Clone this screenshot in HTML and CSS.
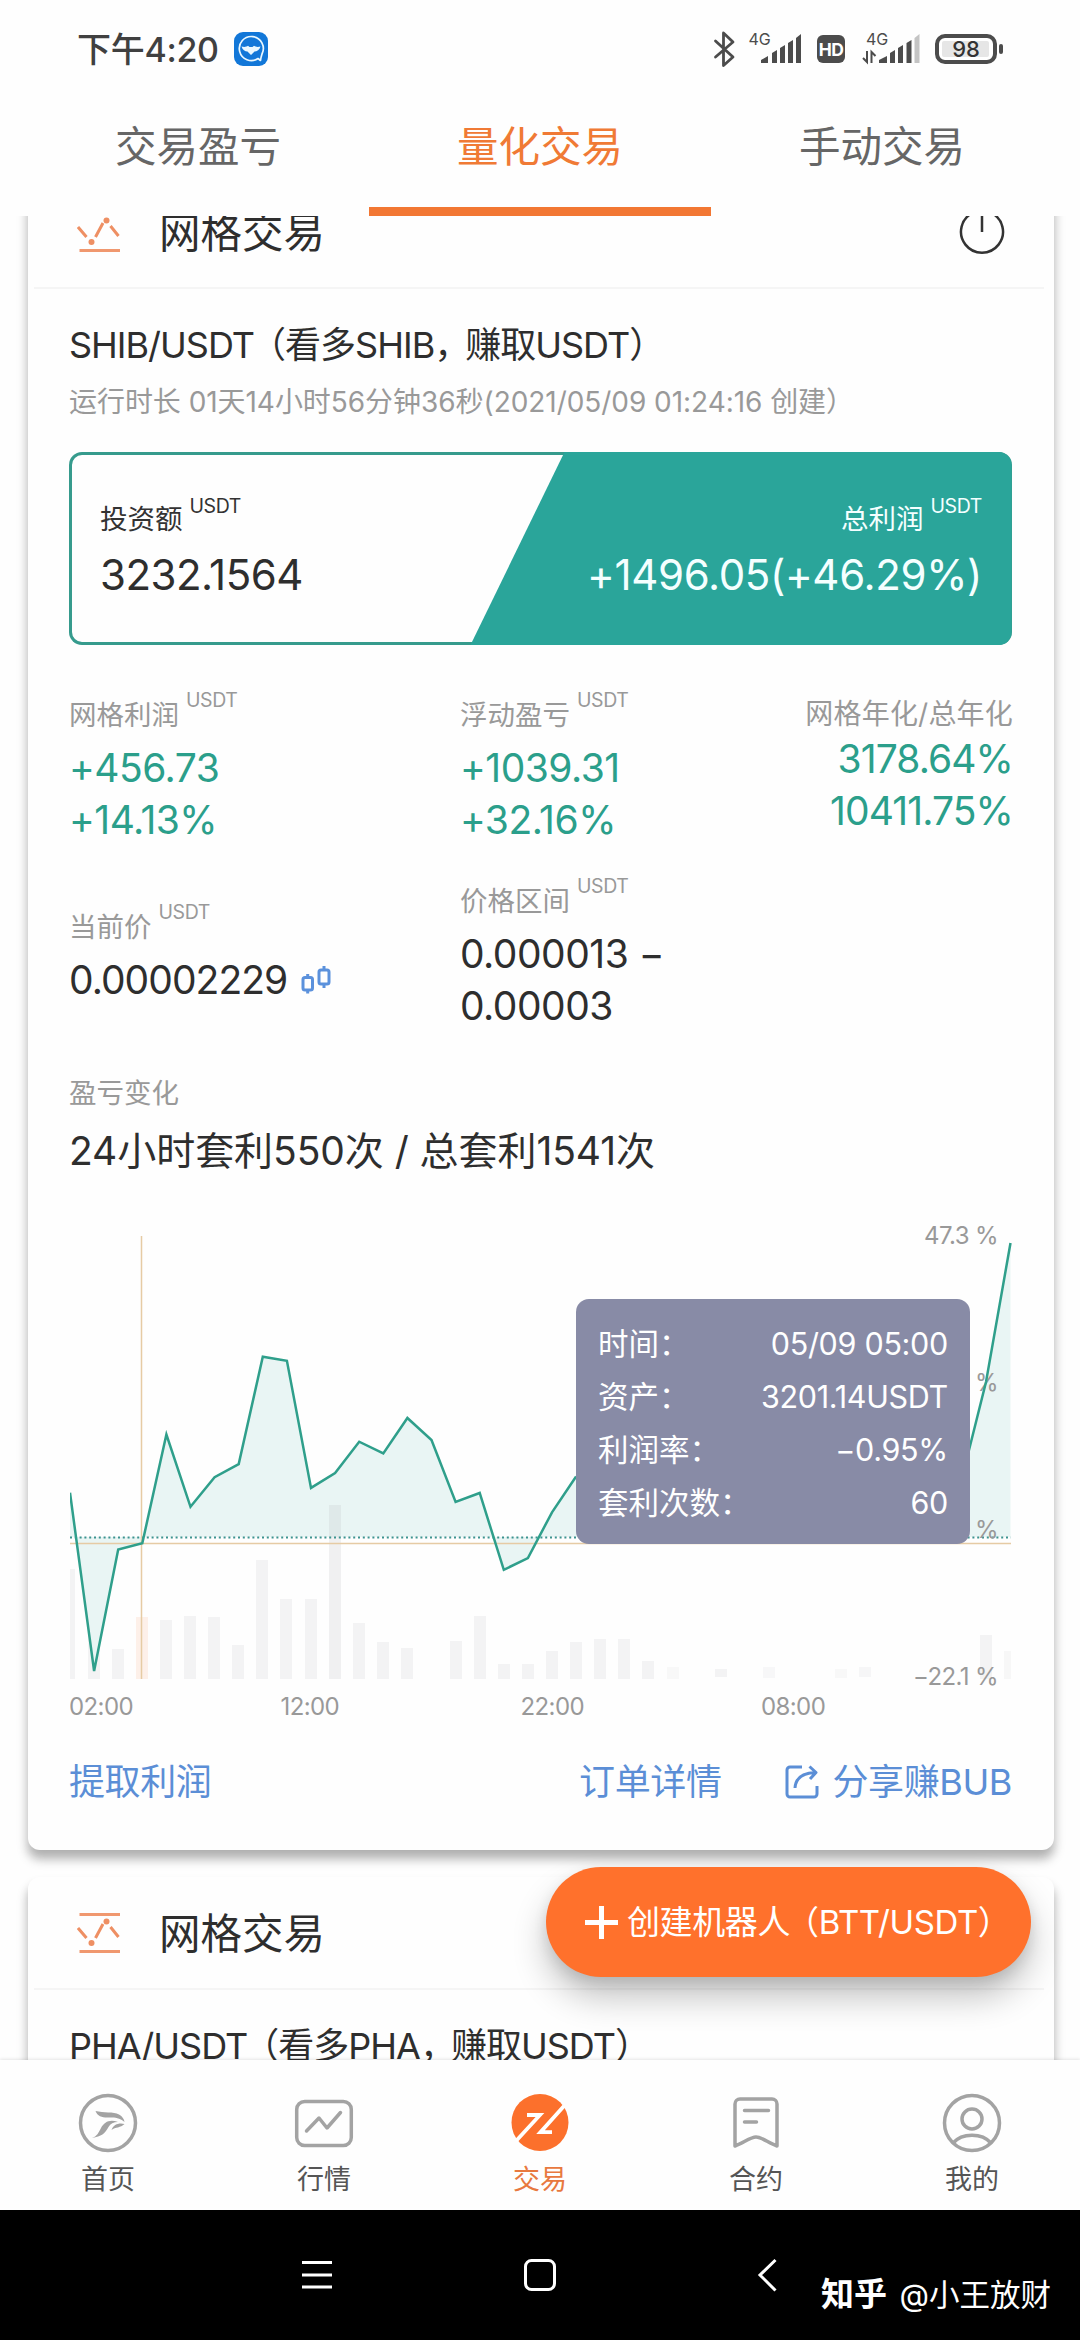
FILE: index.html
```html
<!DOCTYPE html>
<html lang="zh-CN">
<head>
<meta charset="utf-8">
<title>量化交易</title>
<link rel="stylesheet" href="styles.css">
</head>
<body>
<header class="statusbar">
  <span class="clock">下午4:20</span>
  <svg class="app-badge" width="34" height="34" viewBox="0 0 34 34"><rect width="34" height="34" rx="9" fill="#1277d8"/><path d="M26.5 28.5 24 26.500A12 12 0 1 1 28 22c-.8 2.500-1.300 4.500-1.500 6.500z" fill="none" stroke="#eaf8ff" stroke-width="1.700" stroke-linejoin="round"/><path d="M7.500 14.500c3 .8 5 .3 6.500-.8l1.500 1.300h3l1.500-1.300c1.500 1.100 3.500 1.600 6.500.8-1 3.500-3.500 5-6 5L17 23l-3.500-3.500c-2.500 0-5-1.500-6-5z" fill="#eaf8ff"/></svg>
  <svg class="indicators" width="292" height="40" viewBox="712 29 292 40">
    <g fill="none" stroke="#4c4c4c" stroke-width="2.800" stroke-linejoin="round" stroke-linecap="round"><path d="M715.500 41 733 57l-9.500 8.500V33L733 42 715.500 57"/></g>
    <g class="net"><text x="748.500" y="44.500">4G</text><text x="866" y="44.500">4G</text></g>
    <g fill="#4c4c4c">
      <path d="M761 63v-3l7-4v7zM772 53l5-3v13h-5zM780 48l5-3v18h-5zM788 43l5-3v23h-5zM796 38l5-4v29h-5z"/>
      <rect x="817" y="35" width="28" height="28" rx="6"/>
      <path d="M879 63v-3l8-4v7zM890 53l5-3v13h-5zM898 48l5-3v18h-5zM906.500 43l5-3v23h-5z"/>
      <path d="M914.500 38l5-4v29h-5z" fill="#c4c4c4"/>
      <rect x="999" y="44" width="4" height="10" rx="2"/>
    </g>
    <path d="M867 51v11l-4-4M871.500 63V52l4 4" fill="none" stroke="#4c4c4c" stroke-width="2"/>
    <text class="hd" x="831" y="55.500">HD</text>
    <rect x="937" y="36" width="58" height="26" rx="8" fill="#fff" stroke="#4c4c4c" stroke-width="4"/>
    <rect x="942" y="41" width="47" height="16" rx="2" fill="#e6e6e6"/>
    <text class="batt" x="966" y="57">98</text>
  </svg>
</header>

<nav class="tabs">
  <a class="tab">交易盈亏</a>
  <a class="tab tab-on">量化交易</a>
  <a class="tab">手动交易</a>
</nav>

<main class="scroller">
  <section class="card">
    <div class="card-head">
      <svg class="grid-icon" width="44" height="44" viewBox="0 0 44 44"><path d="M2.500 3.500H43M2.500 40.500H43" stroke="#f0986f" stroke-width="2.800"/><path d="M1 17l8.500 10M18.500 27l7.500-14M33.500 16l8 10" stroke="#ee8f63" stroke-width="3"/><circle cx="14.500" cy="32" r="3" fill="#ee8f63"/><circle cx="29.500" cy="10.500" r="3" fill="#ee8f63"/></svg>
      <h2>网格交易</h2>
      <svg class="power" width="46" height="46" viewBox="0 0 46 46" fill="none" stroke="#333" stroke-width="2.500"><path d="M14.500 3.500a21 21 0 1 0 17 0M23 0v23"/></svg>
    </div>
    <div class="card-body">
      <h3>SHIB/USDT<span class="paren">（</span>看多SHIB<span class="comma">，</span>赚取USDT）</h3>
      <p class="runtime">运行时长 01天14小时56分钟36秒(2021/05/09 01:24:16 创建）</p>

      <div class="summary">
        <svg class="slant" width="942" height="193" viewBox="0 0 942 193"><path d="M495 0H929a13 13 0 0 1 13 13V180a13 13 0 0 1-13 13H401z" fill="#2aa59a"/></svg>
        <div class="sum-side">
          <div class="label-row"><span>投资额</span><sup>USDT</sup></div>
          <div class="sum-value">3232.1564</div>
        </div>
        <div class="sum-side sum-right">
          <div class="label-row"><span>总利润</span><sup>USDT</sup></div>
          <div class="sum-value">+1496.05(+46.29%)</div>
        </div>
      </div>

      <div class="stats">
        <div>
          <div class="label-row"><span>网格利润</span><sup>USDT</sup></div>
          <div class="value up">+456.73<br>+14.13%</div>
        </div>
        <div>
          <div class="label-row"><span>浮动盈亏</span><sup>USDT</sup></div>
          <div class="value up">+1039.31<br>+32.16%</div>
        </div>
        <div class="stat-end">
          <div class="plain-label">网格年化/总年化</div>
          <div class="value up">3178.64%<br>10411.75%</div>
        </div>
        <div>
          <div class="label-row"><span>当前价</span><sup>USDT</sup></div>
          <div class="value price"><span>0.00002229</span><svg width="31" height="28" viewBox="0 0 31 28" fill="none" stroke="#5b91dc" stroke-width="3"><rect x="2" y="11.500" width="9.500" height="12.500" rx="2"/><path d="M6.700 8v3M6.700 24v3.500"/><rect x="18" y="4" width="10" height="14" rx="2"/><path d="M23 0v4M23 18v4"/></svg></div>
        </div>
        <div>
          <div class="label-row"><span>价格区间</span><sup>USDT</sup></div>
          <div class="value">0.000013 −<br>0.00003</div>
        </div>
      </div>

      <div class="plain-label change">盈亏变化</div>
      <div class="counts">24小时套利550次 / 总套利1541次</div>

      <div class="chart">
        <svg width="942" height="515" viewBox="70 1215 942 515">
          <g fill="#f3f3f4">
            <rect x="70" y="1569" width="5" height="110"/><rect x="88" y="1616" width="12" height="63"/><rect x="112" y="1649" width="12" height="30"/><rect x="136" y="1617" width="12" height="62" fill="#fdf0e9"/><rect x="160" y="1620" width="12" height="59"/><rect x="184" y="1616" width="12" height="63"/><rect x="208" y="1617" width="12" height="62"/><rect x="232" y="1645" width="12" height="34"/><rect x="256" y="1560" width="12" height="119"/><rect x="280" y="1599" width="12" height="80"/><rect x="305" y="1599" width="12" height="80"/><rect x="353" y="1623" width="12" height="56"/><rect x="377" y="1642" width="12" height="37"/><rect x="401" y="1648" width="12" height="31"/><rect x="450" y="1641" width="12" height="38"/><rect x="474" y="1616" width="12" height="63"/><rect x="498" y="1664" width="12" height="15"/><rect x="522" y="1664" width="12" height="15"/><rect x="546" y="1651" width="12" height="28"/><rect x="570" y="1642" width="12" height="37"/><rect x="594" y="1639" width="12" height="40"/><rect x="618" y="1639" width="12" height="40"/><rect x="642" y="1661" width="12" height="18"/><rect x="667" y="1667" width="12" height="12" fill="#f8f8f8"/><rect x="715" y="1669" width="12" height="8"/><rect x="763" y="1667" width="12" height="11" fill="#f7f7f8"/><rect x="835" y="1669" width="12" height="9" fill="#f8f8f8"/><rect x="859" y="1667" width="12" height="10" fill="#f6f6f7"/><rect x="980" y="1635" width="12" height="44"/><rect x="1004" y="1651" width="7" height="28" fill="#f7f7f7"/>
          </g>
          <path d="M70 1537V1492.700L94.100 1671 118.200 1549.500 142.300 1543.300 166.400 1434.500 190.500 1506.800 214.600 1477.200 238.700 1464.100 262.800 1356.700 286.900 1360.800 311 1487.900 335.100 1473 359.200 1441.700 383.300 1453.400 407.400 1418 431.500 1440 455.600 1502 479.700 1493 503.800 1569.800 527.900 1558.100 552 1512.300 576.100 1476.500 962 1478 986 1382 1010.500 1243V1537z" fill="#e9f5f4"/>
          <rect x="329" y="1505" width="12" height="32" fill="#dfe9e9"/><rect x="329" y="1537" width="12" height="142" fill="#f0f0f1"/>
          <path d="M70 1537.500H1011" stroke="#3d938f" stroke-width="2" stroke-dasharray="2 2.800"/>
          <path d="M70 1543.500H1011M141.500 1236V1679" stroke="#e6cba4" stroke-width="1.500" fill="none"/>
          <g class="axis"><text x="998" y="1244" text-anchor="end">47.3 %</text><text x="998" y="1391" text-anchor="end">%</text><text x="998" y="1538" text-anchor="end">%</text><text x="998" y="1685" text-anchor="end">−22.1 %</text></g>
          <path d="M70 1492.700 94.100 1671 118.200 1549.500 142.300 1543.300 166.400 1434.500 190.500 1506.800 214.600 1477.200 238.700 1464.100 262.800 1356.700 286.900 1360.800 311 1487.900 335.100 1473 359.200 1441.700 383.300 1453.400 407.400 1418 431.500 1440 455.600 1502 479.700 1493 503.800 1569.800 527.900 1558.100 552 1512.300 576.100 1476.500M962 1478 986 1382 1010.500 1243" fill="none" stroke="#2f9f8b" stroke-width="2.500"/>
          <g class="axis"><text x="69" y="1715">02:00</text><text x="280.500" y="1715">12:00</text><text x="520.500" y="1715">22:00</text><text x="761" y="1715">08:00</text></g>
        </svg>
        <dl class="tooltip">
          <div><dt>时间：</dt><dd>05/09 05:00</dd></div>
          <div><dt>资产：</dt><dd>3201.14USDT</dd></div>
          <div><dt>利润率：</dt><dd>−0.95%</dd></div>
          <div><dt>套利次数：</dt><dd>60</dd></div>
        </dl>
      </div>

      <div class="links">
        <a>提取利润</a>
        <a class="orders">订单详情</a>
        <a class="share"><svg width="34" height="34" viewBox="0 0 34 34" fill="none" stroke="#5b8ed6" stroke-width="3"><path d="M17 2H5a3 3 0 0 0-3 3v24a3 3 0 0 0 3 3h24a3 3 0 0 0 3-3v-8"/><path d="M10 23c.5-9 6-15 20.500-15.500M24.500 1.500l6.500 6-6 6.500" stroke-linejoin="round"/></svg>分享赚BUB</a>
      </div>
    </div>
  </section>

  <section class="card">
    <div class="card-head">
      <svg class="grid-icon" width="44" height="44" viewBox="0 0 44 44"><path d="M2.500 3.500H43M2.500 40.500H43" stroke="#f0986f" stroke-width="2.800"/><path d="M1 17l8.500 10M18.500 27l7.500-14M33.500 16l8 10" stroke="#ee8f63" stroke-width="3"/><circle cx="14.500" cy="32" r="3" fill="#ee8f63"/><circle cx="29.500" cy="10.500" r="3" fill="#ee8f63"/></svg>
      <h2>网格交易</h2>
    </div>
    <div class="card-body">
      <h3>PHA/USDT<span class="paren">（</span>看多PHA<span class="comma">，</span>赚取USDT）</h3>
    </div>
  </section>
</main>

<button class="fab"><svg width="33" height="33" viewBox="0 0 33 33"><path d="M16.500 0v33M0 16.500h33" stroke="#fff" stroke-width="5"/></svg><span>创建机器人<span class="paren">（</span>BTT/USDT）</span></button>

<nav class="bottom-nav">
  <a><svg width="60" height="60" viewBox="0 0 60 60"><circle cx="30" cy="30" r="27.500" fill="none" stroke="#a3a3a3" stroke-width="3.500"/><path d="M17.500 18c8 2 18 .5 23.500 3.500 3.500 2 5 4.500 5.500 7.500-6-5-11-4.500-17-4.500-6 0-10-1.500-12-6.500zM14 45c5-1.500 6.500-5.500 9-10 3.500-6 8.500-9 17-6-4.500 0-7.500 1.500-9.500 5-3.500 6.500-7 9.500-16.500 11zM46.500 31c-5-1.500-11 0-13 6 4-3 9-2 13-6z" fill="#a3a3a3"/></svg>首页</a>
  <a><svg width="60" height="60" viewBox="0 0 60 60" fill="none" stroke="#a3a3a3" stroke-width="3.500"><rect x="2.700" y="8.500" width="54.600" height="44" rx="8"/><path d="M12.500 38 25 25l8 10 13.500-15.500" stroke-linecap="round" stroke-linejoin="round"/></svg>行情</a>
  <a class="nav-on"><svg width="60" height="60" viewBox="0 0 60 60"><circle cx="30" cy="29.500" r="28.500" fill="#fc702c"/><path d="M17 22h13L6 48M54 13 30.500 39.200H42" fill="none" stroke="#fff" stroke-width="3.800"/></svg>交易</a>
  <a><svg width="60" height="60" viewBox="0 0 60 60" fill="none" stroke="#a3a3a3" stroke-width="3.500" stroke-linejoin="round" stroke-linecap="round"><path d="M9 53V11a5 5 0 0 1 5-5h32a5 5 0 0 1 5 5v42c-8-2.500-15-9-21-9s-13 6.500-21 9zM18.500 17.500h24M18.500 29h12"/></svg>合约</a>
  <a><svg width="60" height="60" viewBox="0 0 60 60" fill="none" stroke="#a3a3a3" stroke-width="3.500"><circle cx="30" cy="30" r="27.500"/><circle cx="30" cy="26" r="10"/><path d="M11 50c9-10.500 29-10.500 38 0"/></svg>我的</a>
</nav>

<footer class="system-nav">
  <svg width="1080" height="130" viewBox="0 2210 1080 130" fill="none" stroke="#fff"><path d="M302 2262.500h30M302 2275h30M302 2287h30" stroke-width="3"/><rect x="525.500" y="2260.500" width="29" height="29" rx="6" stroke-width="3"/><path d="M775.500 2260 760 2275l15.500 15.500" stroke-width="3"/></svg>
  <div class="watermark"><b>知乎</b> <span>@小王放财</span></div>
</footer>
</body>
</html>
```
FILE: styles.css
```css
* { box-sizing: border-box; }

body {
  margin: 0;
  width: 1080px;
  height: 2340px;
  display: flex;
  flex-direction: column;
  position: relative;
  overflow: hidden;
  background: #fefefe;
  color: #2e2e2e;
  font-family: Inter, "Noto Sans CJK SC", sans-serif;
}

h2, h3, p, dl, dd { margin: 0; font-weight: 400; }
svg { display: block; flex: none; }
.paren { margin-left: -4px; }
.comma { margin-right: -4px; }

.statusbar {
  height: 98px;
  flex: none;
  display: flex;
  align-items: center;
  padding: 0 76px 0 77px;
}
.clock { padding-bottom: 3px; font-size: 34px; font-weight: 500; color: #404040; letter-spacing: -.3px; }
.app-badge { margin-left: 15px; }
.indicators { margin-left: auto; }
.net text { font-size: 16px; fill: #4c4c4c; }
.hd { font-size: 17.500px; font-weight: 700; letter-spacing: -.5px; fill: #fff; text-anchor: middle; }
.batt { font-size: 22px; font-weight: 500; fill: #333; text-anchor: middle; }

.tabs {
  height: 118px;
  flex: none;
  display: flex;
  padding: 0 27px;
}
.tab {
  flex: 1;
  padding-top: 24px;
  font-size: 41.500px;
  line-height: 50px;
  text-align: center;
  color: #666;
}
.tab-on { color: #f07a35; border-bottom: 9px solid #f27733; }

.scroller {
  height: 1844px;
  flex: none;
  overflow: hidden;
}
.card {
  margin: -40px 26px 67px 28px;
  padding-bottom: 46px;
  border-radius: 12px;
  background: #fefefe;
  box-shadow: 0 9px 12px rgba(0, 0, 0, .24), 0 8px 10px rgba(0, 0, 0, .1);
}
.card-head {
  height: 113px;
  margin: 0 10px 0 6px;
  padding: 0 39px 0 43px;
  display: flex;
  align-items: center;
  border-bottom: 2px solid #f5f5f5;
}
.card-head h2 { margin-left: 38px; padding-top: 2px; font-size: 41.500px; line-height: 50px; }
.power { margin-left: auto; }
.card-body { padding: 0 42px 0 41px; }
.card-body h3 {
  margin-top: 34px;
  font-size: 36px;
  line-height: 44px;
  letter-spacing: -1px;
  white-space: nowrap;
}
.runtime {
  margin-top: 17px;
  font-size: 28px;
  line-height: 36px;
  letter-spacing: -.05px;
  color: #999;
  white-space: nowrap;
}

.summary {
  position: relative;
  margin-top: 32px;
  height: 193px;
  padding: 44px 30px 0 31px;
  display: flex;
  justify-content: space-between;
  border-radius: 13px;
  box-shadow: inset 0 0 0 3px #369b8d;
}
.slant { position: absolute; left: 0; top: 0; width: 100%; }
.sum-side { position: relative; color: #333; }
.sum-right { display: flex; flex-direction: column; align-items: flex-end; color: #f4ffff; }
.sum-value { margin-top: 11px; font-size: 42px; line-height: 60px; letter-spacing: -.5px; color: #2e2e2e; }
.sum-right .sum-value { color: #f4ffff; letter-spacing: -.35px; }
.sum-side .label-row, .sum-side sup { color: inherit; }

.label-row {
  height: 40px;
  display: flex;
  align-items: flex-end;
  font-size: 27.500px;
  line-height: 30px;
  color: #999;
}
.label-row sup {
  align-self: flex-start;
  margin-left: 7px;
  font-size: 19.500px;
  line-height: 20px;
  letter-spacing: -.4px;
}
.sum-side .label-row { height: 38px; }

.stats {
  margin-top: 45px;
  display: grid;
  grid-template-columns: 391px 280px 1fr;
  row-gap: 30px;
  align-items: center;
}
.value { margin-top: 12px; font-size: 39px; line-height: 52px; letter-spacing: -.5px; }
.up { color: #2b9f8b; }
.stat-end { margin-right: -1px; text-align: right; }
.stat-end .value { margin-top: 4px; letter-spacing: -.9px; }
.plain-label { font-size: 27.500px; line-height: 30px; color: #999; }
.stat-end .plain-label { font-size: 28px; letter-spacing: .2px; }
.price { display: flex; align-items: center; gap: 14px; letter-spacing: -.95px; }
.change { margin-top: 46px; }
.counts { margin-top: 19px; font-size: 39px; line-height: 48px; letter-spacing: -.06px; white-space: nowrap; }

.chart { position: relative; margin: 40px 0 0 1px; }
.axis text { font-size: 24px; letter-spacing: -.6px; fill: #999; }
.tooltip {
  position: absolute;
  left: 506px;
  top: 84px;
  width: 394px;
  height: 245px;
  padding: 18px 22px;
  border-radius: 13px;
  background: #888ba6;
  color: #fff;
  font-size: 30.500px;
  line-height: 53px;
}
.tooltip div { display: flex; justify-content: space-between; }
.tooltip dd { letter-spacing: -.3px; }

.links {
  margin-top: 30px;
  display: flex;
  font-size: 36px;
  line-height: 44px;
  letter-spacing: -.4px;
  color: #5b8ed6;
}
.orders { margin-left: auto; }
.share { margin-left: 63px; display: flex; align-items: center; gap: 14px; }

.fab {
  position: absolute;
  left: 546px;
  top: 1867px;
  width: 485px;
  height: 110px;
  padding: 0 0 0 39px;
  display: flex;
  align-items: center;
  gap: 9px;
  border: 0;
  border-radius: 55px;
  background: #ff712c;
  box-shadow: 0 20px 34px rgba(0, 0, 0, .24), 0 6px 14px rgba(0, 0, 0, .1);
  color: #fff;
  font: 33px/44px Inter, "Noto Sans CJK SC", sans-serif;
  letter-spacing: -.4px;
  white-space: nowrap;
}

.bottom-nav {
  position: relative;
  height: 150px;
  flex: none;
  display: flex;
  background: #fefefe;
  box-shadow: 0 -1px 3px rgba(0, 0, 0, .1);
}
.bottom-nav a {
  flex: 1;
  padding-top: 33px;
  display: flex;
  flex-direction: column;
  align-items: center;
  gap: 11px;
  font-size: 27px;
  line-height: 32px;
  color: #555;
}
.bottom-nav .nav-on { color: #e8793f; }

.system-nav { position: relative; height: 130px; flex: none; background: #000; }
.watermark {
  position: absolute;
  right: 29px;
  top: 62px;
  font-size: 30.500px;
  line-height: 44px;
  color: #fff;
  white-space: nowrap;
}
.watermark b { margin-right: 4px; font-size: 33px; font-weight: 700; }
```
